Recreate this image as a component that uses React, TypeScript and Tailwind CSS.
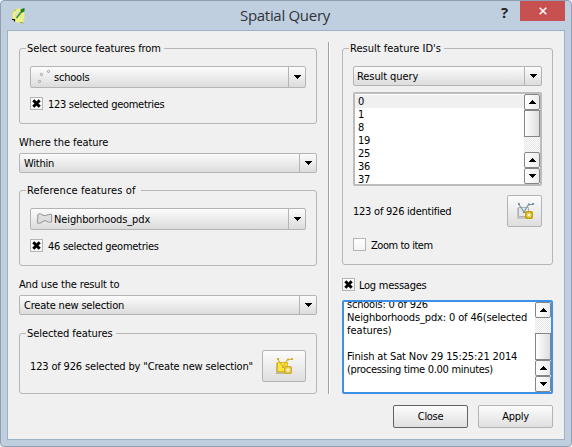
import React from "react";

function Arrow({ up = false }: { up?: boolean }) {
  return (
    <svg width="7" height="4" viewBox="0 0 7 4" shapeRendering="crispEdges" className={up ? "rotate-180" : ""}>
      <path d="M0 0h7v1H6v1H5v1H4v1H3V3H2V2H1V1H0z" fill="#000" />
    </svg>
  );
}

function Combo({ text, tall = false, spacing = "", icon, pad = "pl-[4px]" }: { text: string; tall?: boolean; spacing?: string; icon?: React.ReactNode; pad?: string }) {
  return (
    <div className={`flex shrink-0 rounded-[2px] border border-[#b4b4b4] bg-linear-to-b from-[#fcfcfc] via-[#ececec] to-[#dcdcdc] ${tall ? "h-[22px]" : "h-[20px]"}`}>
      <div className={`flex flex-1 items-center ${pad}`}>
        {icon}
        <span className={spacing}>{text}</span>
      </div>
      <div className="flex w-[17px] items-center justify-center border-l border-[#b4b4b4]">
        <Arrow />
      </div>
    </div>
  );
}

function Check({ on = false, text, spacing = "", gap = "gap-[5px]" }: { on?: boolean; text: string; spacing?: string; gap?: string }) {
  return (
    <div className={`flex h-[13px] items-center ${gap}`}>
      <span className="flex size-[13px] items-center justify-center border border-[#b4b4b4] bg-linear-to-b from-white to-[#f4f4f4]">
        {on && (
          <svg width="9" height="9" viewBox="0 0 9 9">
            <path d="M1.3 1.3L7.7 7.7M7.7 1.3L1.3 7.7" stroke="#000" strokeWidth="3" />
          </svg>
        )}
      </span>
      <span className={`pt-[2px] ${spacing}`}>{text}</span>
    </div>
  );
}

function Group({ title, width, spacing = "", className, children }: { title: string; width: string; spacing?: string; className: string; children: React.ReactNode }) {
  return (
    <section className={`relative rounded-[3px] border border-[#b6b6b6] ${className}`}>
      <h2 className={`absolute -top-[7px] left-[6px] h-[14px] bg-[#f0f0f0] pl-px ${width} ${spacing}`}>{title}</h2>
      {children}
    </section>
  );
}

function ScrollButton({ up = false }: { up?: boolean }) {
  return (
    <div className="flex h-[16px] shrink-0 items-center justify-center rounded-[2px] border border-[#858585] bg-linear-to-r from-white to-[#ececec]">
      <Arrow up={up} />
    </div>
  );
}

const track = "bg-[conic-gradient(#e4e4e4_25%,#fff_0_50%,#e4e4e4_0_75%,#fff_0)] bg-[length:2px_2px]";
const thumb = "h-[27px] shrink-0 border border-[#858585] bg-linear-to-r from-white to-[#dedede]";

function SelectionIcon({ yellow = false }: { yellow?: boolean }) {
  const line = yellow ? "#d6b02c" : "#7893a5";
  return (
    <svg width="18" height="18" viewBox="0 0 18 18">
      <path d="M1 6h2v9h9v2H1z" fill={yellow ? "#c2b88e" : "#c6c6c6"} />
      <path d="M2.5 5.5h10v9h-10z" fill={yellow ? "#fde53c" : "#e6e6e6"} stroke={yellow ? "#dcb820" : "#b0b0b0"} />
      <path d="M3 2.5l5 7.5 4.5-7.5H17" fill="none" stroke={line} strokeWidth="1.1" />
      <path d="M2 1h2v2H2zM12 1.5h2v2h-2zM16 1h2v2h-2zM7 9h2v2H7z" fill={line} />
      <rect x="9.5" y="9.5" width="7" height="7" rx="1" fill={yellow ? "#dfbd35" : "#ceaa08"} stroke={yellow ? "#d0aa28" : "#c49f08"} />
      <path d="M13 10.5v5M10.5 13h5M11.4 11.4l3.2 3.2M14.6 11.4l-3.2 3.2" stroke="#fff8cf" strokeWidth="1" />
    </svg>
  );
}

function PointsIcon() {
  return (
    <svg width="16" height="16" viewBox="0 0 16 16" className="mr-[1px] shrink-0" fill="#f4f4f4" stroke="#9a9a9a">
      <circle cx="4.5" cy="5.5" r="1.1" />
      <circle cx="11.5" cy="2.5" r="1.1" />
      <circle cx="2.5" cy="12.5" r="1.1" />
    </svg>
  );
}

function PolygonIcon() {
  return (
    <svg width="17" height="14" viewBox="0 0 17 14" className="mr-[1px] shrink-0">
      <path d="M1.6 3.5C2.4 1.3 5 1.3 7 3.2C10 4.4 12 1.5 15.3 2.5C16.5 5 14.8 6 15.8 9.3C14 11.5 11.5 9.6 9 8.6C6.5 8.7 4.5 12.4 1.6 11C.6 8 2.6 6.2 1.6 3.5z" fill="#dedede" stroke="#9b9b9b" strokeWidth="1.1" />
    </svg>
  );
}

function AppIcon() {
  return (
    <svg width="14" height="17" viewBox="0 0 14 17" className="shrink-0">
      <ellipse cx="6.5" cy="8.5" rx="4.8" ry="5.8" fill="#d9e3b6" stroke="#edf27a" strokeWidth="2.6" />
      <path d="M7 8v6M7 13l4.5 2" stroke="#f1f47c" strokeWidth="2.4" />
      <path d="M8 15.3l3.5.7M2 4.5L4 2.5" stroke="#9aa63a" />
      <path d="M4.5 11L9.3 4.8" stroke="#3f8f3e" strokeWidth="1.6" />
      <path d="M8.3 2.8L12.5.8v3.4L9.5 6z" fill="#197e25" />
      <path d="M0 12.5h2.5v2" fill="none" stroke="#111" strokeWidth="1.2" />
    </svg>
  );
}

export default function App() {
  return (
    <div className="h-[447px] w-[572px] overflow-hidden bg-white font-['DejaVu_Sans_Condensed','DejaVu_Sans',sans-serif] text-[11px] leading-[13px] whitespace-nowrap text-black [font-stretch:condensed]">
      <div className="flex h-[447px] w-[572px] flex-col rounded-[4px] border border-[#909fb1] bg-[#c0cfdf] pr-[6px] pb-[6px] pl-[6px]">
        <header className="flex h-[29px] shrink-0 items-start [font-stretch:normal]">
          <div className="flex w-[229px] pt-[6px] pl-[5px]"><AppIcon /></div>
          <h1 className="w-[100px] pt-[4px] pl-[4px] font-['Open_Sans',sans-serif] text-[15px] leading-[20px] tracking-[-0.3px] text-[#303438]">Spatial Query</h1>
          <span className="ml-auto w-[19px] pt-[2px] font-['Open_Sans',sans-serif] text-[15px] leading-[18px] font-bold text-[#222]">?</span>
          <button className="flex h-[20px] w-[45px] items-center justify-center bg-[#c75050]">
            <svg width="8" height="8" viewBox="0 0 8 8"><path d="M.7.7l6.6 6.6M7.3.7L.7 7.3" stroke="#fff" strokeWidth="1.6" /></svg>
          </button>
        </header>
        <main className="flex min-h-0 flex-1 border border-[#9eb0c3] bg-[#f0f0f0] pl-[11px]">
          <div className="flex w-[298px] flex-col pt-[17px]">
            <Group title="Select source features from" width="w-[138px]" spacing="tracking-[-0.11px]" className="flex h-[76px] flex-col gap-[9px] px-[10px] pt-[17px]">
              <Combo tall text="schools" spacing="tracking-[-0.2px]" pad="pl-[6px]" icon={<PointsIcon />} />
              <Check on text="123 selected geometries" spacing="tracking-[-0.29px]" />
            </Group>
            <p className="mt-[12px] h-[17px] tracking-[-0.06px]">Where the feature</p>
            <Combo text="Within" spacing="tracking-[-0.25px]" />
            <Group title="Reference features of" width="w-[115px]" spacing="tracking-[0.1px]" className="mt-[17px] flex h-[76px] flex-col gap-[9px] px-[10px] pt-[17px]">
              <Combo tall text="Neighborhoods_pdx" spacing="tracking-[-0.12px]" pad="pl-[5px]" icon={<PolygonIcon />} />
              <Check on text="46 selected geometries" spacing="tracking-[-0.28px]" />
            </Group>
            <p className="mt-[12px] h-[17px] tracking-[-0.15px]">And use the result to</p>
            <Combo text="Create new selection" spacing="tracking-[-0.2px]" />
            <Group title="Selected features" width="w-[90px]" spacing="tracking-[-0.08px]" className="mt-[18px] flex h-[61px] items-center justify-between pt-[7px] pr-[10px] pb-[2px] pl-[10px]">
              <span className="tracking-[-0.16px]">123 of 926 selected by "Create new selection"</span>
              <button className="flex h-[32px] w-[44px] items-center justify-center rounded-[2px] border border-[#b4b4b4] bg-linear-to-b from-[#fcfcfc] to-[#dedede]"><SelectionIcon yellow /></button>
            </Group>
          </div>
          <div className="mt-[11px] ml-[11px] h-[352px] w-[2px] border-r border-l border-r-white border-l-[#a0a0a0]" />
          <div className="ml-[12px] flex w-[211px] flex-col pt-[17px]">
            <Group title="Result feature ID's" width="w-[95px]" className="flex h-[217px] flex-col px-[10px] pt-[17px]">
              <Combo text="Result query" spacing="tracking-[-0.08px]" pad="pl-[3px]" />
              <div className="mt-[6px] flex h-[94px] shrink-0 overflow-hidden rounded-[2px] border-2 border-[#bcbcbc] bg-white">
                <ul className="flex-1 pt-px">
                  {["0", "1", "8", "19", "25", "36", "37"].map((n) => (
                    <li key={n} className={`h-[13px] pl-[3px] tracking-[-0.3px] ${n === "0" ? "bg-[#f0f0f0]" : ""}`}>{n}</li>
                  ))}
                </ul>
                <div className={`flex w-[16px] flex-col ${track}`}>
                  <ScrollButton up />
                  <div className={thumb} />
                  <div className="flex-1" />
                  <ScrollButton up />
                  <ScrollButton />
                </div>
              </div>
              <div className="mt-[9px] flex h-[32px] items-center justify-between">
                <span className="tracking-[-0.24px]">123 of 926 identified</span>
                <button className="flex h-[32px] w-[35px] items-center justify-center rounded-[2px] border border-[#b4b4b4] bg-linear-to-b from-[#fcfcfc] to-[#dedede]"><SelectionIcon /></button>
              </div>
              <div className="mt-[11px]"><Check text="Zoom to item" spacing="tracking-[-0.45px]" /></div>
            </Group>
            <div className="mt-[13px]"><Check on text="Log messages" spacing="tracking-[-0.25px]" gap="gap-[4px]" /></div>
            <div className="mt-[9px] flex h-[94px] shrink-0 overflow-hidden rounded-[2px] border-2 border-[#3c91e6] bg-white">
              <div className="flex flex-1 flex-col justify-end overflow-hidden pb-[16px] pl-[3px] leading-[13px]">
                <p className="shrink-0 tracking-[-0.2px]">schools: 0 of 926</p>
                <p className="shrink-0 tracking-[-0.14px]">Neighborhoods_pdx: 0 of 46(selected</p>
                <p className="shrink-0">features)</p>
                <p className="h-[13px] shrink-0" />
                <p className="shrink-0 tracking-[-0.13px]">Finish at Sat Nov 29 15:25:21 2014</p>
                <p className="shrink-0 tracking-[-0.3px]">(processing time 0.00 minutes)</p>
              </div>
              <div className={`flex w-[16px] flex-col ${track}`}>
                <ScrollButton up />
                <div className="flex-1" />
                <div className={thumb} />
                <ScrollButton up />
                <ScrollButton />
              </div>
            </div>
            <div className="mt-[11px] flex justify-end gap-[10px] tracking-[-0.3px]">
              <button className="h-[23px] w-[75px] rounded-[2px] border border-[#606468] bg-linear-to-b from-[#fcfcfc] to-[#e0e0e0]">Close</button>
              <button className="h-[23px] w-[75px] rounded-[2px] border border-[#b4b4b4] bg-linear-to-b from-[#fcfcfc] to-[#e0e0e0]">Apply</button>
            </div>
          </div>
        </main>
      </div>
    </div>
  );
}
